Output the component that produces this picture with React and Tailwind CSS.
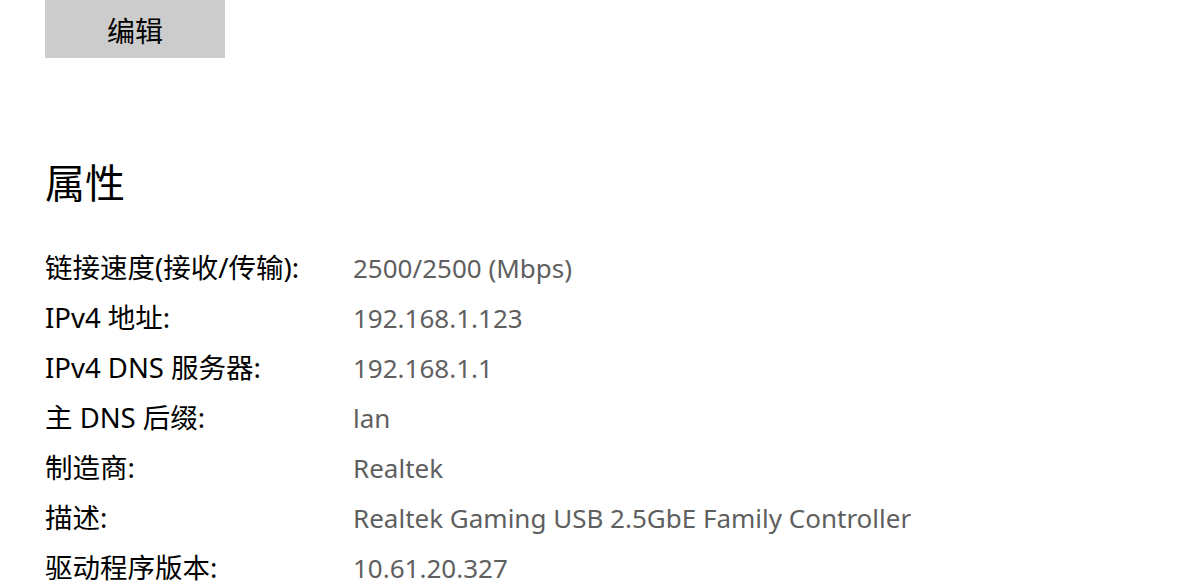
export default function App() {
  const rows = [
    ["链接速度(接收/传输):", "2500/2500 (Mbps)"],
    ["IPv4 地址:", "192.168.1.123"],
    ["IPv4 DNS 服务器:", "192.168.1.1"],
    ["主 DNS 后缀:", "lan"],
    ["制造商:", "Realtek"],
    ["描述:", "Realtek Gaming USB 2.5GbE Family Controller"],
    ["驱动程序版本:", "10.61.20.327"],
  ];
  return (
    <div className="w-[1190px] h-[586px] overflow-hidden bg-white px-[45px] font-['Noto_Sans','Noto_Sans_CJK_SC',sans-serif]">
      <div className="w-[180px] h-[58px] bg-[#cccccc] flex items-center justify-center text-[28px] text-black pt-[3px]">
        编辑
      </div>
      <h2 className="mt-[97px] h-[56px] leading-[56px] text-[40px] font-normal text-black">属性</h2>
      <div className="mt-[32px] flex flex-col">
        {rows.map(([k, v]) => (
          <div key={k} className="flex h-[50px] leading-[50px]">
            <div className="w-[308px] shrink-0 text-black text-[27.5px]">{k}</div>
            <div className="text-[#5f5f5f] text-[26px]">{v}</div>
          </div>
        ))}
      </div>
    </div>
  );
}
